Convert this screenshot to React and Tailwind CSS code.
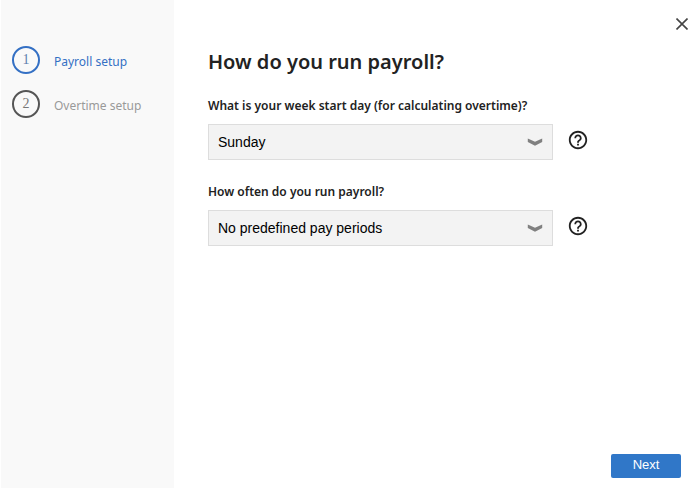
import { useState } from 'react';

const steps = [
  { id: 1, label: 'Payroll setup' },
  { id: 2, label: 'Overtime setup' },
];

const weekDays = ['Sunday', 'Monday', 'Tuesday', 'Wednesday', 'Thursday', 'Friday', 'Saturday'];

const payPeriods = [
  'No predefined pay periods',
  'Weekly',
  'Every two weeks',
  'Twice a month',
  'Monthly',
];

const StepItem = ({ step, active }) => (
  <li>
    <a
      href={`#step-${step.id}`}
      aria-current={active ? 'step' : undefined}
      className="flex items-center gap-3.5"
    >
      <span
        className={`flex h-7 w-7 shrink-0 justify-center rounded-full border-2 font-['Liberation_Serif',serif] text-sm leading-6 ${
          active ? 'border-[#3470c4] text-[#5f7fae]' : 'border-[#555555] text-[#777777]'
        }`}
      >
        {step.id}
      </span>
      <span className={`pt-1 text-xs leading-5 ${active ? 'text-[#3470c4]' : 'text-[#999999]'}`}>
        {step.label}
      </span>
    </a>
  </li>
);

const SelectField = ({ id, label, options, value, onChange }) => (
  <div>
    <label htmlFor={id} className="block text-xs leading-5 font-semibold text-[#222222]">
      {label}
    </label>
    <div className="mt-2 flex items-center gap-3.5">
      <div className="relative max-w-[345px] flex-1">
        <select
          id={id}
          value={value}
          onChange={(e) => onChange(e.target.value)}
          className="h-9 w-full appearance-none border border-[#dddddd] bg-[#f3f3f3] pr-10 pl-[9px] font-['Liberation_Sans',sans-serif] text-sm text-black outline-none focus:border-[#3470c4]"
        >
          {options.map((option) => (
            <option key={option}>{option}</option>
          ))}
        </select>
        <svg
          viewBox="0 0 16 8"
          className="pointer-events-none absolute top-1/2 right-2.5 h-2 w-4 -translate-y-1/2"
          aria-hidden="true"
        >
          <path d="M0.8 0.4 L8 3.8 L15.2 0.4 V4 L8 7.8 L0.8 4 Z" fill="#808080" />
        </svg>
      </div>
      <button type="button" aria-label={`Help: ${label}`} className="mb-1 shrink-0 text-[#222222]">
        <svg viewBox="0 0 24 24" className="h-[22px] w-[22px]" fill="currentColor" aria-hidden="true">
          <path d="M11 18h2v-2h-2v2zm1-16C6.48 2 2 6.48 2 12s4.48 10 10 10 10-4.48 10-10S17.52 2 12 2zm0 18c-4.41 0-8-3.59-8-8s3.59-8 8-8 8 3.59 8 8-3.59 8-8 8zm0-14c-2.21 0-4 1.79-4 4h2c0-1.1.9-2 2-2s2 .9 2 2c0 2-3 1.75-3 5h2c0-2.25 3-2.5 3-5 0-2.21-1.79-4-4-4z" />
        </svg>
      </button>
    </div>
  </div>
);

const App = () => {
  const [startDay, setStartDay] = useState('Sunday');
  const [frequency, setFrequency] = useState('No predefined pay periods');

  return (
    <div className="flex min-h-screen bg-white pl-px font-['Noto_Sans',sans-serif]">
      <nav aria-label="Setup steps" className="w-1/4 max-w-[173px] shrink-0 bg-[#f9f9f9] pt-[46px] pl-[11px]">
        <ol className="space-y-4">
          {steps.map((step) => (
            <StepItem key={step.id} step={step} active={step.id === 1} />
          ))}
        </ol>
      </nav>

      <main className="flex min-w-0 flex-1 flex-col pr-[19px] pl-[34px]">
        <div className="flex h-12 items-center justify-end">
          <button type="button" aria-label="Close" className="-mr-[15px] p-2 text-[#444444]">
            <svg viewBox="0 0 12 12" className="h-3 w-3" fill="none" stroke="currentColor" strokeWidth="1.6" aria-hidden="true">
              <path d="M0.5 0.5 L11.5 11.5 M11.5 0.5 L0.5 11.5" />
            </svg>
          </button>
        </div>

        <h1 className="text-xl leading-7 font-semibold text-[#222222]">How do you run payroll?</h1>

        <form className="mt-5 flex flex-1 flex-col">
          <div className="space-y-[22px]">
            <SelectField
              id="week-start"
              label="What is your week start day (for calculating overtime)?"
              options={weekDays}
              value={startDay}
              onChange={setStartDay}
            />
            <SelectField
              id="pay-frequency"
              label="How often do you run payroll?"
              options={payPeriods}
              value={frequency}
              onChange={setFrequency}
            />
          </div>

          <div className="mt-auto flex justify-end pb-2.5">
            <button
              type="button"
              className="h-6 w-[70px] rounded-xs bg-[#3077c8] pb-0.5 font-['Liberation_Sans',sans-serif] text-[13px] text-white hover:bg-[#2868b2]"
            >
              Next
            </button>
          </div>
        </form>
      </main>
    </div>
  );
};

export default App;
